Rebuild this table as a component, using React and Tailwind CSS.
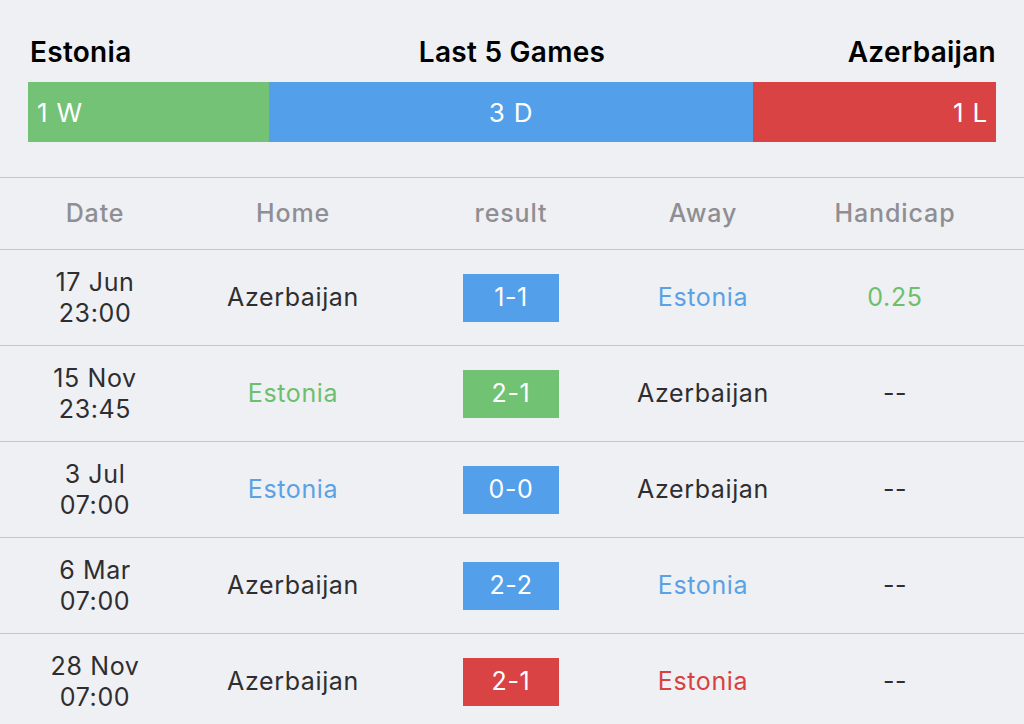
import React from "react";

const GREEN = "text-[#6dbf6e]";
const BLUE = "text-[#5ba2e4]";
const RED = "text-[#d94141]";
const DARK = "text-[#2e2e30]";

const games = [
  { day: "17 Jun", time: "23:00", home: "Azerbaijan", homeColor: DARK, score: "1-1", badge: "bg-[#539fe9]", away: "Estonia", awayColor: BLUE, hcp: "0.25", hcpColor: GREEN },
  { day: "15 Nov", time: "23:45", home: "Estonia", homeColor: GREEN, score: "2-1", badge: "bg-[#72c274]", away: "Azerbaijan", awayColor: DARK, hcp: "--", hcpColor: DARK },
  { day: "3 Jul", time: "07:00", home: "Estonia", homeColor: BLUE, score: "0-0", badge: "bg-[#539fe9]", away: "Azerbaijan", awayColor: DARK, hcp: "--", hcpColor: DARK },
  { day: "6 Mar", time: "07:00", home: "Azerbaijan", homeColor: DARK, score: "2-2", badge: "bg-[#539fe9]", away: "Estonia", awayColor: BLUE, hcp: "--", hcpColor: DARK },
  { day: "28 Nov", time: "07:00", home: "Azerbaijan", homeColor: DARK, score: "2-1", badge: "bg-[#d94343]", away: "Estonia", awayColor: RED, hcp: "--", hcpColor: DARK },
];

function Row({ g }) {
  return (
    <div className="flex h-[96px] items-center border-b border-[#c6c6c9] text-[25px] tracking-[0.025em]">
      <div className={`w-[190px] text-center leading-[31px] ${DARK}`}>
        <div>{g.day}</div>
        <div>{g.time}</div>
      </div>
      <div className={`w-[206px] text-center ${g.homeColor}`}>{g.home}</div>
      <div className="w-[230px] flex justify-center">
        <div className={`w-[96px] h-[48px] flex items-center justify-center text-white ${g.badge}`}>
          {g.score}
        </div>
      </div>
      <div className={`w-[154px] text-center ${g.awayColor}`}>{g.away}</div>
      <div className={`w-[230px] text-center ${g.hcpColor}`}>{g.hcp}</div>
    </div>
  );
}

export default function App() {
  return (
    <div className="w-[1024px] h-[724px] overflow-hidden bg-[#eff0f4] font-['Inter',sans-serif]">
      <div className="px-[28px] pt-[33px]">
        <div className="flex items-center justify-between text-[28px] font-semibold text-black leading-[38px] tracking-[0.01em]">
          <span className="w-[220px] pl-[2px]">Estonia</span>
          <span>Last 5 Games</span>
          <span className="w-[220px] text-right">Azerbaijan</span>
        </div>
        <div className="mt-[11px] flex h-[60px] text-[26px] tracking-[0.03em] text-white">
          <div className="w-[241px] bg-[#74c276] flex items-center pl-[9px]">1 W</div>
          <div className="w-[484px] bg-[#539fe9] flex items-center justify-center">3 D</div>
          <div className="flex-1 bg-[#d94343] flex items-center justify-end pr-[8px]">1 L</div>
        </div>
      </div>
      <div className="mt-[35px] border-t border-[#c6c6c9]">
        <div className="flex h-[72px] items-center border-b border-[#c6c6c9] text-[25px] tracking-[0.035em] font-medium text-[#8e8e93]">
          <div className="w-[190px] text-center">Date</div>
          <div className="w-[206px] text-center">Home</div>
          <div className="w-[230px] text-center">result</div>
          <div className="w-[154px] text-center">Away</div>
          <div className="w-[230px] text-center">Handicap</div>
        </div>
        {games.map((g, i) => (
          <Row key={i} g={g} />
        ))}
      </div>
    </div>
  );
}
